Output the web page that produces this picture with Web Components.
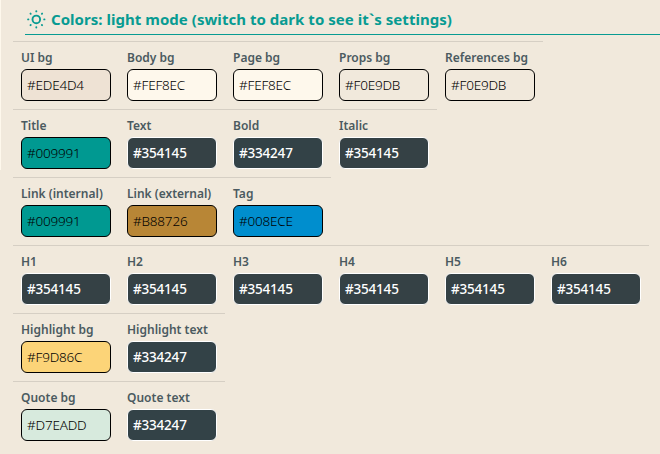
<!DOCTYPE html>
<html lang="en">
<head>
<meta charset="utf-8">
<title>Colors</title>
<style>
html, body { margin: 0; height: 100%; overflow: hidden; }
body { background: #f1e9dc; font-family: "Noto Sans", "Open Sans", sans-serif; }
</style>
</head>
<body>
<color-panel>
  <panel-title slot="title">Colors: light mode (switch to dark to see it`s settings)</panel-title>
  <color-row>
    <color-swatch label="UI bg" value="#EDE4D4" fill="#eee2d4"></color-swatch>
    <color-swatch label="Body bg" value="#FEF8EC"></color-swatch>
    <color-swatch label="Page bg" value="#FEF8EC"></color-swatch>
    <color-swatch label="Props bg" value="#F0E9DB" fill="#f1e9dc"></color-swatch>
    <color-swatch label="References bg" value="#F0E9DB" fill="#f1e9dc"></color-swatch>
  </color-row>
  <color-row>
    <color-swatch label="Title" value="#009991"></color-swatch>
    <color-swatch label="Text" value="#354145" dark></color-swatch>
    <color-swatch label="Bold" value="#334247" dark></color-swatch>
    <color-swatch label="Italic" value="#354145" dark></color-swatch>
  </color-row>
  <color-row>
    <color-swatch label="Link (internal)" value="#009991"></color-swatch>
    <color-swatch label="Link (external)" value="#B88726" fill="#b88636"></color-swatch>
    <color-swatch label="Tag" value="#008ECE"></color-swatch>
  </color-row>
  <color-row>
    <color-swatch label="H1" value="#354145" dark></color-swatch>
    <color-swatch label="H2" value="#354145" dark></color-swatch>
    <color-swatch label="H3" value="#354145" dark></color-swatch>
    <color-swatch label="H4" value="#354145" dark></color-swatch>
    <color-swatch label="H5" value="#354145" dark></color-swatch>
    <color-swatch label="H6" value="#354145" dark></color-swatch>
  </color-row>
  <color-row>
    <color-swatch label="Highlight bg" value="#F9D86C" fill="#fcd478"></color-swatch>
    <color-swatch label="Highlight text" value="#334247" dark></color-swatch>
  </color-row>
  <color-row>
    <color-swatch label="Quote bg" value="#D7EADD"></color-swatch>
    <color-swatch label="Quote text" value="#334247" dark></color-swatch>
  </color-row>
</color-panel>
<script>
class ColorPanel extends HTMLElement {
  constructor() {
    super();
    this.attachShadow({ mode: "open" }).innerHTML = `
      <style>
        :host { display: block; height: 454px; box-sizing: border-box; padding-left: 13px;
          background: linear-gradient(#fef8ec, #fef8ec) 0 0 / 1px 170px no-repeat; }
        header { margin-left: 12px; height: 35px; box-sizing: border-box;
          border-bottom: 1px solid #089b92; margin-bottom: 6px; }
      </style>
      <header><slot name="title"></slot></header><slot></slot>`;
  }
}
class PanelTitle extends HTMLElement {
  constructor() {
    super();
    this.attachShadow({ mode: "open" }).innerHTML = `
      <style>
        :host { display: flex; align-items: center; gap: 5px; height: 38px; color: #089b92;
          font-size: 15px; font-weight: 700; letter-spacing: .035px; white-space: nowrap; }
        svg { flex: none; width: 21px; height: 20px; }
      </style>
      <svg viewBox="0 0 21 20" fill="none" stroke="currentColor" stroke-width="1.9" stroke-linecap="round">
        <circle cx="11.3" cy="10.4" r="3.8"/>
        <path d="M11.3 2.1v.3M11.3 18.3v.3M3.1 10.4h.3M19.2 10.4h.3M5.5 4.6l.2.2M16.9 16l.2.2M17.1 4.6l-.2.2M5.7 16l-.2.2"/>
      </svg>
      <span><slot></slot></span>`;
  }
}
class ColorRow extends HTMLElement {
  constructor() {
    super();
    this.attachShadow({ mode: "open" }).innerHTML = `
      <style>
        :host { display: flex; width: fit-content; height: 68px; box-sizing: border-box;
          border-top: 1px solid #d6cfc4; }
      </style>
      <slot></slot>`;
  }
}
class ColorSwatch extends HTMLElement {
  connectedCallback() {
    const root = this.attachShadow({ mode: "open" });
    root.innerHTML = `
      <style>
        :host { display: block; width: 106px; box-sizing: border-box; padding: 7px 8px 0; }
        .label { height: 20px; line-height: 18px; font-size: 12px; font-weight: 600;
          color: #4b5a60; white-space: nowrap; }
        .box { height: 32px; box-sizing: border-box; border: 1px solid #000; border-radius: 6px;
          padding-left: 5px; font-size: 13.5px; line-height: 31px; font-weight: 300; color: #000;
          letter-spacing: -.2px; }
        :host([dark]) .box { border-color: #fff; color: #fff; font-weight: 500; }
      </style>
      <div class="label"></div><div class="box"></div>`;
    const box = root.querySelector(".box");
    root.querySelector(".label").textContent = this.getAttribute("label");
    box.textContent = this.getAttribute("value");
    box.style.background = this.getAttribute("fill") || this.getAttribute("value");
  }
}
customElements.define("color-panel", ColorPanel);
customElements.define("panel-title", PanelTitle);
customElements.define("color-row", ColorRow);
customElements.define("color-swatch", ColorSwatch);
</script>
</body>
</html>
